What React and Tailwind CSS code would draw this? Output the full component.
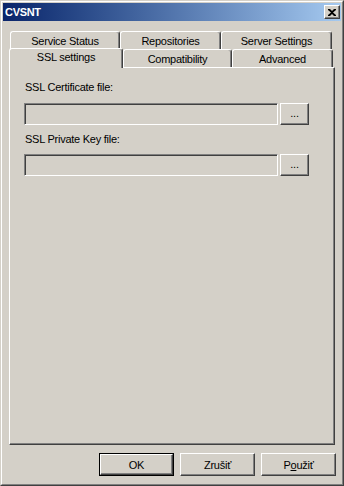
import React from 'react';

const font = { fontFamily: '"Liberation Sans", Arial, sans-serif' };

function Tab({ label, width, selected }) {
  return (
    <div
      className={`flex justify-center border-l border-t border-r border-l-white border-t-white border-r-[#404040] rounded-t-[3px] shadow-[inset_-1px_0_0_#808080] bg-[#d4d0c8] ${
        selected ? 'h-[20px] pt-[1px] relative z-10 -mt-[1px]' : 'h-[18px] pt-[2px]'
      }`}
      style={{ width }}
    >
      {label}
    </div>
  );
}

function Field() {
  return (
    <div className="flex gap-[2px]">
      <div className="w-[254px] h-[22px] border-t border-l border-t-[#808080] border-l-[#808080] border-b border-r border-b-white border-r-white shadow-[inset_1px_1px_0_#404040,inset_-1px_-1px_0_#d4d0c8] bg-[#d4d0c8]" />
      <div className="w-[29px] h-[22px] flex items-center justify-center border-t border-l border-t-white border-l-white border-b border-r border-b-[#404040] border-r-[#404040] shadow-[inset_-1px_-1px_0_#808080] text-black leading-none pb-[2px]">
        ...
      </div>
    </div>
  );
}

function Button({ children, isDefault }) {
  const inner = (
    <div className="w-full h-full flex items-center justify-center border-t border-l border-t-white border-l-white border-b border-r border-b-[#404040] border-r-[#404040] shadow-[inset_-1px_-1px_0_#808080]">
      {children}
    </div>
  );
  return (
    <div className={`w-[75px] h-[23px] ${isDefault ? 'border border-black' : ''}`}>{inner}</div>
  );
}

export default function App() {
  return (
    <div style={font} className="w-[344px] h-[486px] bg-[#d4d0c8] text-[11px] leading-[14px] tracking-[-0.25px] text-black select-none">
      <div className="w-full h-full border border-t-[#d4d0c8] border-l-[#d4d0c8] border-b-[#404040] border-r-[#404040]">
        <div className="w-full h-full border border-t-white border-l-white border-b-[#808080] border-r-[#808080] p-px flex flex-col">
          {/* Title bar */}
          <div className="h-[18px] bg-gradient-to-r from-[#0a246a] to-[#a6caf0] flex items-center justify-between pl-[2px] pr-[1px]">
            <span className="text-white font-bold text-[11px] tracking-[-0.3px]">CVSNT</span>
            <div className="w-[16px] h-[14px] bg-[#d4d0c8] border-t border-l border-t-white border-l-white border-b border-r border-b-[#404040] border-r-[#404040] shadow-[inset_-1px_-1px_0_#808080] flex items-center justify-center">
              <svg width="8" height="7" viewBox="0 0 8 7">
                <path d="M0 0h2l2 2 2-2h2v1L5 3.5 8 6v1H6L4 5 2 7H0V6l3-2.5L0 1z" fill="#000" />
              </svg>
            </div>
          </div>

          {/* Tabs */}
          <div className="ml-[6px] mt-[10px] w-[326px] flex flex-col">
            <div className="flex pl-[1px] h-[18px]">
              <Tab label="Service Status" width={110} />
              <Tab label="Repositories" width={101} />
              <Tab label="Server Settings" width={111} />
            </div>
            <div className="flex h-[18px] items-start">
              <Tab label="SSL settings" width={114} selected />
              <Tab label="Compatibility" width={109} />
              <Tab label="Advanced" width={101} />
            </div>
            <div className="h-[378px] border-l border-t border-l-white border-t-white border-r border-b border-r-[#404040] border-b-[#404040] shadow-[inset_-1px_-1px_0_#808080] pl-[14px] pt-[12px] flex flex-col">
              <div className="h-[14px] ml-[1px]">SSL Certificate file:</div>
              <div className="mt-[9px]">
                <Field />
              </div>
              <div className="mt-[7px] h-[14px] ml-[1px]">SSL Private Key file:</div>
              <div className="mt-[8px]">
                <Field />
              </div>
            </div>
          </div>

          {/* Buttons */}
          <div className="flex justify-end gap-[6px] mt-[8px] pr-[5px]">
            <Button isDefault>OK</Button>
            <Button>Zrušiť</Button>
            <Button>
              <span>
                P<span className="underline">o</span>užiť
              </span>
            </Button>
          </div>
        </div>
      </div>
    </div>
  );
}
